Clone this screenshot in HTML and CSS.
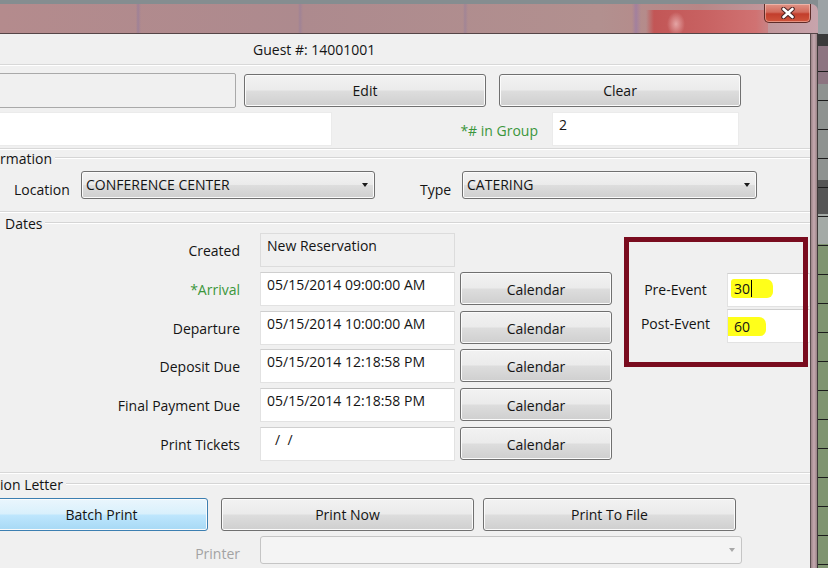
FILE: index.html
```html
<!DOCTYPE html>
<html>
  <head>
    <title>Reservation</title>
    <link rel="stylesheet" href="styles.css">
  </head>

  <body>
    <div id="topBar">
      <div id="glass">
        <div id="closeButton">
          <svg width="16" height="12" viewBox="0 0 16 12">
            <path d="M3.5 2 L12.5 10 M12.5 2 L3.5 10" stroke="#4a2424" stroke-width="4.6" stroke-linecap="round"/>
            <path d="M3.5 2 L12.5 10 M12.5 2 L3.5 10" stroke="#ffffff" stroke-width="2.6" stroke-linecap="round"/>
          </svg>
        </div>
      </div>
      <div class="backdrop"></div>
    </div>

    <div id="windowRow">
      <div id="client">
        <div id="guestNumber">Guest #: 14001001</div>
        <div class="etched"></div>

        <div class="row" id="actionRow">
          <div class="flatBox" id="searchBox"></div>
          <div class="button" id="editButton">Edit</div>
          <div class="button" id="clearButton">Clear</div>
        </div>

        <div class="row" id="nameRow">
          <div class="field" id="nameField"></div>
          <div class="label required" id="groupLabel">*# in Group</div>
          <div class="field" id="groupField">2</div>
        </div>
        <div class="etched" id="nameEnd"></div>

        <div class="groupHeader" id="infoHeader"><span>rmation</span></div>
        <div class="row" id="infoRow">
          <div class="label" id="locationLabel">Location</div>
          <div class="combo" id="locationCombo">CONFERENCE CENTER</div>
          <div class="label" id="typeLabel">Type</div>
          <div class="combo" id="typeCombo">CATERING</div>
        </div>
        <div class="etched" id="infoEnd"></div>

        <div class="groupHeader" id="datesHeader"><span>Dates</span></div>
        <div id="datesGroup">
          <div id="dateGrid">
            <div class="label">Created</div>
            <div class="field readOnly">New Reservation</div>
            <div></div>

            <div class="label required">*Arrival</div>
            <div class="field">05/15/2014 09:00:00 AM</div>
            <div class="button calendar">Calendar</div>

            <div class="label">Departure</div>
            <div class="field">05/15/2014 10:00:00 AM</div>
            <div class="button calendar">Calendar</div>

            <div class="label">Deposit Due</div>
            <div class="field">05/15/2014 12:18:58 PM</div>
            <div class="button calendar">Calendar</div>

            <div class="label">Final Payment Due</div>
            <div class="field">05/15/2014 12:18:58 PM</div>
            <div class="button calendar">Calendar</div>

            <div class="label">Print Tickets</div>
            <div class="field" id="ticketField">/&nbsp;&nbsp;/</div>
            <div class="button calendar">Calendar</div>
          </div>

          <div id="bufferColumn">
            <div class="bufferRow">
              <div class="bufferLabel">Pre-Event</div>
              <div class="field bufferField"><span class="marker" id="preMarker">30<span class="caret"></span></span></div>
            </div>
            <div class="bufferRow">
              <div class="bufferLabel" id="postLabel">Post-Event</div>
              <div class="field bufferField"><span class="marker" id="postMarker">60</span></div>
            </div>
          </div>

          <!-- hand drawn annotation around the buffer fields -->
          <div id="annotation"></div>
        </div>
        <div class="etched" id="datesEnd"></div>

        <div class="groupHeader" id="letterHeader"><span>ion Letter</span></div>
        <div class="row" id="printRow">
          <div class="button hot" id="batchButton">Batch Print</div>
          <div class="button" id="printNowButton">Print Now</div>
          <div class="button" id="printFileButton">Print To File</div>
        </div>
        <div class="row" id="printerRow">
          <div class="label disabled" id="printerLabel">Printer</div>
          <div class="combo disabledCombo" id="printerCombo"></div>
        </div>
      </div>
      <div id="frame"></div>
      <div class="backdrop" id="sideBackdrop"></div>
    </div>
  </body>
</html>
```

FILE: styles.css
```css
*, *:before, *:after {
  box-sizing: border-box;
  padding: 0;
  margin: 0;
}

html, body {
  width: 828px;
  height: 568px;
  overflow: hidden;
}

body {
  font-family: "Open Sans", "Noto Sans", sans-serif;
  font-size: 14px;
  color: #141414;
  background: #858d90;
}

/* window caption */

#topBar {
  display: flex;
  height: 34px;
}

#glass {
  width: 818px;
  margin-top: 4px;
  border-top-right-radius: 7px;
  border-bottom: 1px solid #554547;
  display: flex;
  justify-content: flex-end;
  background:
    radial-gradient(ellipse 9px 12px at 676px 20px, rgba(255, 225, 225, 0.55), rgba(255, 225, 225, 0)),
    linear-gradient(to right, rgba(195, 80, 80, 0) 0, #c25656 8px, #c86262 60px, #d07272 110px, rgba(208, 114, 114, 0.6) 120px) 646px 6px / 122px 24px no-repeat,
    linear-gradient(to right,
      rgba(0, 0, 0, 0) 136px, rgba(140, 120, 160, 0.5) 138px, rgba(0, 0, 0, 0) 141px,
      rgba(0, 0, 0, 0) 298px, rgba(140, 120, 160, 0.4) 300px, rgba(0, 0, 0, 0) 303px,
      rgba(0, 0, 0, 0) 463px, rgba(140, 120, 160, 0.4) 465px, rgba(0, 0, 0, 0) 468px,
      rgba(0, 0, 0, 0) 632px, rgba(150, 120, 170, 0.6) 636px, rgba(0, 0, 0, 0) 641px),
    linear-gradient(to right, #b48b8d, #ad8a8e 300px, #b2908f 600px, #b88686 700px, #c8a4ac);
}

#closeButton {
  width: 47px;
  height: 19px;
  margin-right: 7px;
  border: 1px solid #5e2c28;
  border-top: none;
  border-radius: 0 0 5px 5px;
  background: linear-gradient(#e09486 0%, #d26b5c 45%, #c23e2c 55%, #d0553c 100%);
  box-shadow: inset 0 0 0 1px rgba(255, 220, 210, 0.45);
  display: flex;
  align-items: center;
  justify-content: center;
}

.backdrop {
  width: 10px;
  background: #9ca2a5;
}

/* window body */

#windowRow {
  display: flex;
  height: 534px;
}

#client {
  width: 811px;
  overflow: hidden;
  background: #f0f0f0;
  border-right: 1px solid #5d4f51;
  position: relative;
}

#frame {
  width: 7px;
  background: linear-gradient(to right, #9c8588, #c6a9b0 50%, #9a8487);
  border-right: 1px solid #3f3a3a;
}

#sideBackdrop {
  background:
    repeating-linear-gradient(to bottom, transparent 0, transparent 28px, #1c1c1c 28px, #1c1c1c 29px),
    linear-gradient(to bottom, #3a3a3a 0, #3a3a3a 12px, #8c7480 12px, #8c7480 50px, #8e9290 50px, #8e9290 146px, #555 146px, #555 180px, #a4aaa6 180px, #a4aaa6 210px, #7f9470 210px);
  background-position: 0 9px, 0 0;
}

#guestNumber {
  height: 30px;
  line-height: 31px;
  padding-left: 253px;
}

.etched {
  height: 2px;
  border-top: 1px solid #d8d8d8;
  border-bottom: 1px solid #ffffff;
}

.row {
  display: flex;
}

.label {
  white-space: nowrap;
}

.required {
  color: #3b963b;
}

.disabled {
  color: #a3a3a3;
}

.button {
  height: 34px;
  border: 1px solid #707070;
  border-radius: 3px;
  background: linear-gradient(#f2f2f2 0%, #ebebeb 48%, #dddddd 52%, #cfcfcf 100%);
  box-shadow: inset 0 0 0 1px #fbfbfb;
  text-align: center;
  line-height: 32px;
}

.button.hot {
  border-color: #3c7fb1;
  background: linear-gradient(#eaf6fd 0%, #d9f0fc 48%, #bee6fd 52%, #a7d9f5 100%);
}

.field {
  height: 34px;
  background: #ffffff;
  border: 1px solid #e2e2e2;
  border-top-color: #cfcfcf;
  padding: 2px 6px;
  line-height: 20px;
  white-space: nowrap;
  overflow: hidden;
}

.field.readOnly {
  background: #f0f0f0;
  border-color: #dcdcdc;
}

.flatBox {
  border: 1px solid #a9a9a9;
  border-radius: 2px;
  background: #f0f0f0;
}

.combo {
  position: relative;
  height: 28px;
  border: 1px solid #707070;
  border-radius: 3px;
  background: linear-gradient(#f2f2f2 0%, #ebebeb 48%, #dddddd 52%, #cfcfcf 100%);
  box-shadow: inset 0 0 0 1px #fbfbfb;
  padding-left: 4px;
  line-height: 25px;
}

.combo::after {
  content: '';
  position: absolute;
  right: 6px;
  top: 11px;
  border-left: 3.5px solid transparent;
  border-right: 3.5px solid transparent;
  border-top: 4px solid #1a1a1a;
}

.disabledCombo {
  border-color: #c5c5c5;
  background: #f4f4f4;
  box-shadow: none;
}

.disabledCombo::after {
  border-top-color: #a8a8a8;
}

/* top rows */

#actionRow {
  margin-top: 7px;
  height: 35px;
  align-items: flex-start;
}

#searchBox {
  width: 241px;
  height: 35px;
  margin-left: -5px;
}

#editButton {
  width: 242px;
  margin-top: 1px;
  margin-left: 8px;
  height: 33px;
}

#clearButton {
  width: 242px;
  margin-top: 1px;
  margin-left: 13px;
  height: 33px;
}

#nameRow {
  margin-top: 4px;
  align-items: center;
}

#nameField {
  width: 337px;
  margin-left: -5px;
  border-color: #ebebeb;
}

#groupLabel {
  width: 206px;
  text-align: right;
  padding-top: 3px;
}

#groupField {
  width: 187px;
  margin-left: 14px;
  border-color: #ebebeb;
}

#nameEnd {
  margin-top: 2px;
}

/* group box captions */

.groupHeader {
  display: flex;
  align-items: center;
  height: 16px;
}

.groupHeader::after {
  content: '';
  flex: 1;
  height: 2px;
  margin-left: 3px;
  border-top: 1px solid #d5d5d5;
  border-bottom: 1px solid #ffffff;
}

#datesHeader, #letterHeader {
  height: 20px;
}

#datesHeader span {
  padding-left: 5px;
}

/* information */

#infoRow {
  margin-top: 5px;
  height: 28px;
  align-items: flex-start;
}

#locationLabel {
  margin-left: 14px;
  width: 67px;
  padding-top: 10px;
  line-height: 18px;
}

#locationCombo {
  width: 294px;
}

#typeLabel {
  margin-left: 45px;
  width: 42px;
  padding-top: 10px;
  line-height: 18px;
}

#typeCombo {
  width: 295px;
}

#infoEnd {
  margin-top: 12px;
}

/* dates */

#datesGroup {
  position: relative;
  display: flex;
  height: 239px;
}

#dateGrid {
  display: grid;
  grid-template-columns: 255px 195px 152px;
  grid-auto-rows: 34px;
  column-gap: 5px;
  row-gap: 4.8px;
}

#dateGrid .label {
  padding-right: 15px;
  text-align: right;
  line-height: 36px;
}

.calendar {
  height: 33px;
  line-height: 33px;
}

#ticketField {
  padding-left: 14px;
}

#bufferColumn {
  margin-left: 12px;
  padding-top: 40px;
  flex: 1;
}

.bufferRow {
  display: flex;
  margin-bottom: 2px;
}

.bufferLabel {
  width: 103px;
  text-align: center;
  line-height: 34px;
}

#postLabel {
  line-height: 30px;
}

.bufferField {
  flex: 1;
  padding-top: 5px;
}

.marker {
  display: inline-block;
  background: #ffff1a;
  line-height: 19px;
  border-radius: 3px 7px 6px 3px;
}

#preMarker {
  margin-left: -3px;
  padding: 0 21px 0 3px;
}

#postMarker {
  margin-left: -9px;
  padding: 0 16px 0 9px;
  margin-top: 2px;
}

.caret {
  display: inline-block;
  width: 1px;
  height: 17px;
  margin-left: 1px;
  vertical-align: -3px;
  background: #000000;
}

#annotation {
  position: absolute;
  left: 624px;
  top: 4px;
  width: 184px;
  height: 130px;
  border: 5px solid #7a0c1f;
}

/* letter */

#printRow {
  margin-top: 4px;
}

#printRow .button {
  height: 33px;
  line-height: 32px;
}

#batchButton {
  width: 213px;
  margin-left: -5px;
}

#printNowButton {
  width: 253px;
  margin-left: 13px;
}

#printFileButton {
  width: 253px;
  margin-left: 9px;
}

#printerRow {
  margin-top: 5px;
}

#printerLabel {
  width: 240px;
  text-align: right;
  line-height: 36px;
}

#printerCombo {
  width: 482px;
  margin-left: 20px;
}
```
